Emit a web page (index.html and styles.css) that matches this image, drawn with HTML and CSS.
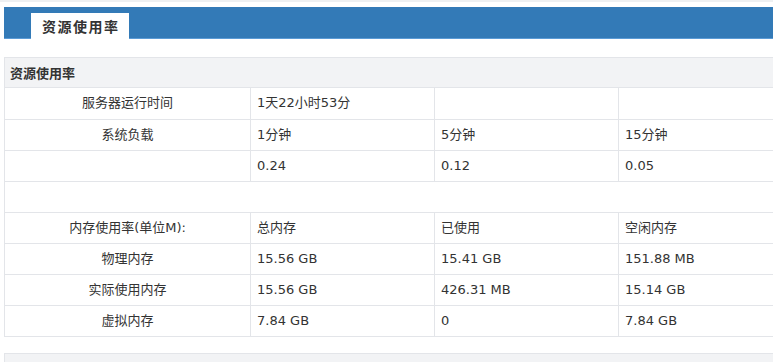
FILE: index.html
```html
<!DOCTYPE html>
<html lang="zh-CN">
<head>
<meta charset="utf-8">
<title>资源使用率</title>
<link rel="stylesheet" href="styles.css">
</head>
<body>
<div class="topline"></div>
<div class="page">
  <div class="tabbar">
    <div class="tab">资源使用率</div>
  </div>
  <div class="panel">
    <div class="panel-head">资源使用率</div>
    <table class="grid">
      <colgroup>
        <col class="c1"><col class="c2"><col class="c3"><col class="c4">
      </colgroup>
      <tr><td class="label">服务器运行时间</td><td>1天22小时53分</td><td></td><td></td></tr>
      <tr><td class="label">系统负载</td><td>1分钟</td><td>5分钟</td><td>15分钟</td></tr>
      <tr><td class="label"></td><td>0.24</td><td>0.12</td><td>0.05</td></tr>
      <tr><td colspan="4" class="blank"></td></tr>
      <tr><td class="label">内存使用率(单位M):</td><td>总内存</td><td>已使用</td><td>空闲内存</td></tr>
      <tr><td class="label">物理内存</td><td>15.56 GB</td><td>15.41 GB</td><td>151.88 MB</td></tr>
      <tr><td class="label">实际使用内存</td><td>15.56 GB</td><td>426.31 MB</td><td>15.14 GB</td></tr>
      <tr><td class="label">虚拟内存</td><td>7.84 GB</td><td>0</td><td>7.84 GB</td></tr>
    </table>
  </div>
  <div class="panel next">
    <div class="panel-head"></div>
  </div>
</div>
</body>
</html>
```
FILE: styles.css
```css
html, body {
  margin: 0;
  padding: 0;
  overflow: hidden;
  background: #fff;
}
body {
  font-family: "DejaVu Sans", "Noto Sans CJK SC", sans-serif;
  font-size: 13px;
  color: #333;
}
.topline {
  height: 2px;
  background: #eef0f2;
}
.page {
  padding: 5px 0 0 4px;
  width: 900px;
}
.tabbar {
  background: #337ab7;
  border-bottom: 1px solid #5b9bd6;
  padding: 6px 0 0 27px;
  box-sizing: border-box;
  height: 32px;
}
.tab {
  display: inline-block;
  box-sizing: border-box;
  width: 98px;
  height: 26px;
  background: #fff;
  font-family: "Noto Sans CJK SC", sans-serif;
  font-weight: bold;
  font-size: 14px;
  letter-spacing: 1.5px;
  line-height: 26px;
  padding-left: 11px;
  color: #333;
}
.panel {
  margin-top: 18px;
  width: 798px;
}
.panel.next {
  margin-top: 16px;
}
.panel-head {
  height: 29px;
  line-height: 29px;
  background: #f2f3f5;
  border: 1px solid #e3e5e9;
  padding-left: 5px;
  font-family: "Noto Sans CJK SC", sans-serif;
  font-weight: bold;
  font-size: 13px;
}
.grid {
  border-collapse: collapse;
  table-layout: fixed;
  width: 798px;
}
.c1 { width: 246px; }
.c2 { width: 184px; }
.c3 { width: 184px; }
.c4 { width: 184px; }
.grid td {
  border: 1px solid #e3e5e9;
  border-top: 0;
  height: 31px;
  padding: 0 0 0 6px;
  box-sizing: border-box;
  line-height: 30px;
  white-space: nowrap;
}
.grid td.label {
  text-align: center;
  padding: 0;
}
```
